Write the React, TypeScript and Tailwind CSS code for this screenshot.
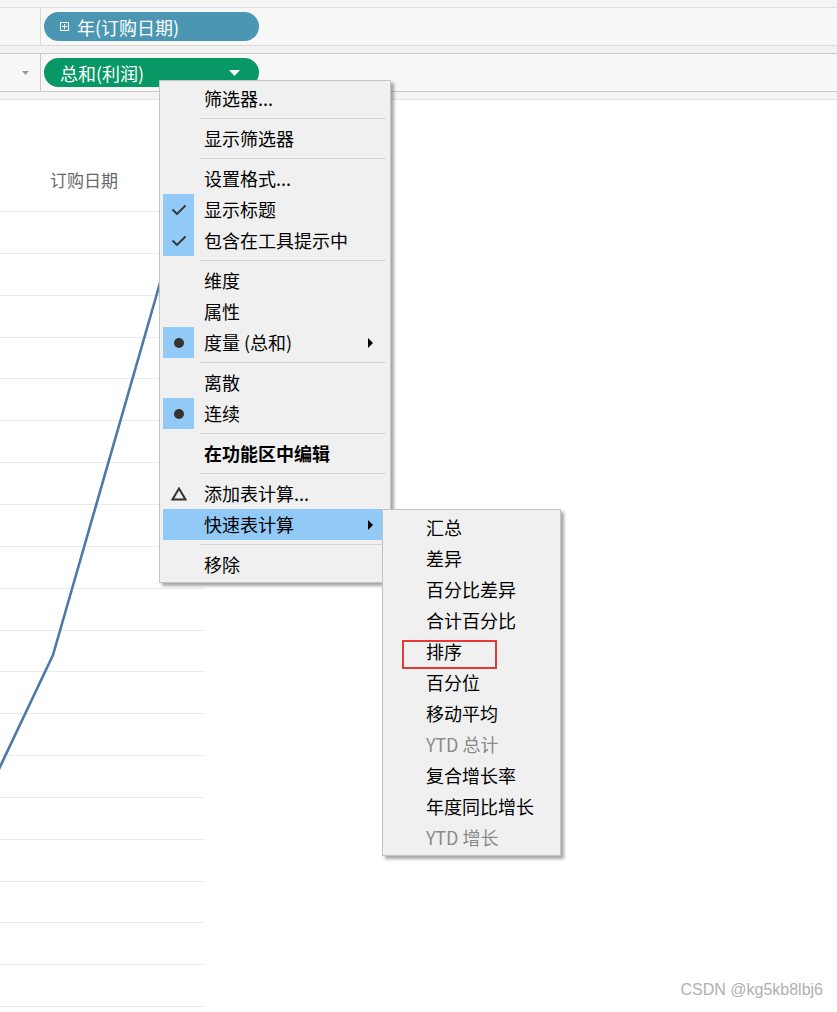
import React from "react";

const FONT = { fontFamily: '"Noto Sans CJK SC", "Noto Sans", sans-serif' };

type Item =
  | { sep: true }
  | {
      sep?: false;
      label: string;
      icon?: "check" | "dot" | "delta";
      arrow?: boolean;
      bold?: boolean;
      active?: boolean;
      disabled?: boolean;
      boxed?: boolean;
    };

const mainItems: Item[] = [
  { label: "筛选器..." },
  { sep: true },
  { label: "显示筛选器" },
  { sep: true },
  { label: "设置格式..." },
  { label: "显示标题", icon: "check" },
  { label: "包含在工具提示中", icon: "check" },
  { sep: true },
  { label: "维度" },
  { label: "属性" },
  { label: "度量 (总和)", icon: "dot", arrow: true },
  { sep: true },
  { label: "离散" },
  { label: "连续", icon: "dot" },
  { sep: true },
  { label: "在功能区中编辑", bold: true },
  { sep: true },
  { label: "添加表计算...", icon: "delta" },
  { label: "快速表计算", arrow: true, active: true },
  { sep: true },
  { label: "移除" },
];

const subItems: Item[] = [
  { label: "汇总" },
  { label: "差异" },
  { label: "百分比差异" },
  { label: "合计百分比" },
  { label: "排序", boxed: true },
  { label: "百分位" },
  { label: "移动平均" },
  { label: "YTD 总计", disabled: true },
  { label: "复合增长率" },
  { label: "年度同比增长" },
  { label: "YTD 增长", disabled: true },
];

function Icon({ kind }: { kind?: "check" | "dot" | "delta" }) {
  if (kind === "check")
    return (
      <svg width="16" height="13" viewBox="0 0 16 13">
        <path d="M1.5 6.5 L6 11 L14.5 2.5" fill="none" stroke="#333" strokeWidth="1.8" />
      </svg>
    );
  if (kind === "dot")
    return <div className="w-[10px] h-[10px] rounded-full bg-[#333]" />;
  if (kind === "delta")
    return (
      <svg width="16" height="14" viewBox="0 0 16 14">
        <path d="M8 1.5 L14.5 12.5 L1.5 12.5 Z" fill="none" stroke="#333" strokeWidth="2" strokeLinejoin="miter" />
      </svg>
    );
  return null;
}

function Menu({ items, textGap }: { items: Item[]; textGap: string }) {
  return (
    <div className="flex flex-col">
      {items.map((it, i) => {
        if (it.sep)
          return (
            <div key={i} className="h-[9px] flex items-start">
              <div className="mt-[4px] h-px bg-[#d4d4d4] ml-[37px] mr-[-4px] flex-1" />
            </div>
          );
        const checked = it.icon === "check" || it.icon === "dot";
        return (
          <div
            key={i}
            className={`relative h-[31px] flex items-center ${it.active ? "bg-[#91c9f7]" : ""}`}
          >
            <div
              className={`w-[31px] h-full flex items-center justify-center shrink-0 ${
                checked ? "bg-[#91c9f7]" : ""
              }`}
            >
              <Icon kind={it.icon} />
            </div>
            <span
              className={`${textGap} text-[18px] leading-[31px] whitespace-nowrap ${
                it.bold ? "font-bold text-black" : it.disabled ? "text-[#8a8a8a]" : "text-black"
              }`}
            >
              {it.label}
            </span>
            {it.arrow && (
              <svg className="ml-auto mr-[9px]" width="5" height="10" viewBox="0 0 5 10">
                <path d="M0 0 L5 5 L0 10 Z" fill="#000" />
              </svg>
            )}
            {it.boxed && (
              <div className="absolute left-[16px] top-[4px] w-[95px] h-[29px] border-2 border-[#e53935]" />
            )}
          </div>
        );
      })}
    </div>
  );
}

export default function App() {
  const gridYs: number[] = [];
  for (let k = 0; k < 20; k++) {
    const y = 111 + 41.85 * k;
    if (y < 912) gridYs.push(y);
  }
  return (
    <div className="relative w-[837px] h-[1012px] overflow-hidden bg-white flex flex-col" style={FONT}>
      {/* Shelves */}
      <div className="h-[8px] bg-[#f5f5f5] border-b border-[#dedede] shrink-0" />
      <div className="h-[38px] bg-[#f7f7f7] border-b border-[#d9d9d9] flex shrink-0">
        <div className="w-[41px] border-r border-[#d9d9d9] shrink-0" />
        <div className="flex items-center pl-[3px]">
          <div className="w-[215px] h-[29px] rounded-full bg-[#4b97b3] flex items-center pl-[16px] text-white">
            <svg width="9" height="9" viewBox="0 0 9 9" className="mr-[8px]">
              <rect x="0.5" y="0.5" width="8" height="8" fill="none" stroke="#fff" strokeWidth="1" />
              <path d="M2 4.5 H7 M4.5 2 V7" stroke="#fff" strokeWidth="1" />
            </svg>
            <span className="text-[18px] leading-none">年(订购日期)</span>
          </div>
        </div>
      </div>
      <div className="h-[8px] bg-[#f2f2f2] border-b border-[#c8c8c8] shrink-0" />
      <div className="h-[38px] bg-[#f7f7f7] border-b border-[#c8c8c8] flex shrink-0">
        <div className="w-[41px] border-r border-[#c8c8c8] shrink-0 flex items-center justify-center">
          <svg width="7" height="4" viewBox="0 0 7 4" className="ml-[11px]">
            <path d="M0 0 H7 L3.5 4 Z" fill="#9a9a9a" />
          </svg>
        </div>
        <div className="flex items-center pl-[3px]">
          <div className="w-[215px] h-[29px] rounded-full bg-[#079866] flex items-center pl-[16px] pr-[19px] text-white">
            <span className="text-[18px] leading-none">总和(利润)</span>
            <svg width="11" height="6" viewBox="0 0 11 6" className="ml-auto">
              <path d="M0 0 H11 L5.5 6 Z" fill="#fff" />
            </svg>
          </div>
        </div>
      </div>
      <div className="h-[8px] bg-[#f5f5f5] border-b border-[#e4e4e4] shrink-0" />

      {/* Chart area */}
      <div className="relative flex-1 bg-white">
        <div className="pt-[70px] pl-[50px] text-[17px] text-[#6a6a6a] leading-[20px]">订购日期</div>
        <svg className="absolute left-0 top-0" width="837" height="912">
          {gridYs.map((y, i) => (
            <line key={i} x1="0" x2="204" y1={Math.round(y) + 0.5} y2={Math.round(y) + 0.5} stroke="#ebebeb" strokeWidth="1" />
          ))}
          <polyline
            points="-10,688 53,555 158,190 200,40"
            fill="none"
            stroke="#4e79a7"
            strokeWidth="2.6"
            strokeLinejoin="round"
          />
        </svg>
        <div className="absolute right-[14px] bottom-[10px] text-[16px] text-[#b0b0b0]" style={{ fontFamily: '"Liberation Sans", Arial, sans-serif' }}>
          CSDN @kg5kb8lbj6
        </div>
      </div>

      {/* Context menu */}
      <div className="absolute left-[159px] top-[80px] w-[232px] bg-[#f0f0f0] border border-[#c4c4c4] pt-[2px] pb-[2px] pl-[3px] pr-[8px] shadow-[3px_3px_3px_rgba(0,0,0,0.35)]">
        <Menu items={mainItems} textGap="ml-[10px]" />
      </div>

      {/* Submenu */}
      <div className="absolute left-[382px] top-[509px] w-[179px] bg-[#f0f0f0] border border-[#c4c4c4] pt-[2px] pb-[2px] pl-[3px] pr-[8px] shadow-[3px_3px_3px_rgba(0,0,0,0.35)]">
        <Menu items={subItems} textGap="ml-[9px]" />
      </div>
    </div>
  );
}
